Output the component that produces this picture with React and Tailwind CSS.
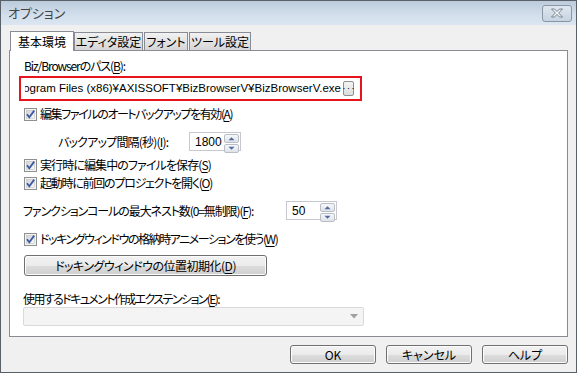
import React from "react"

const jp = "font-['Noto_Sans_CJK_JP','Noto_Sans',sans-serif] [font-feature-settings:'palt'_1] [font-kerning:normal]"

// Win7-style push button gradient
const btn =
  "flex items-center justify-center rounded-[3px] border border-[#707070] bg-[linear-gradient(#f2f2f2_0%,#ebebeb_50%,#dddddd_51%,#cfcfcf_100%)] shadow-[inset_0_0_0_1px_#fcfcfc] text-[12px] text-black"

function U({ children }) {
  return <span className="underline underline-offset-[2px]">{children}</span>
}

function Check({ children, track }) {
  return (
    <div className="flex h-[14px] items-center">
      <svg width="13" height="13" viewBox="0 0 13 13" className="ml-[14px] shrink-0">
        <defs>
          <linearGradient id="cbg" x1="0" y1="0" x2="1" y2="1">
            <stop offset="0" stopColor="#cfd1d4" />
            <stop offset="1" stopColor="#fbfbfb" />
          </linearGradient>
        </defs>
        <rect x="0.5" y="0.5" width="12" height="12" fill="#f4f4f4" stroke="#8e8f8f" />
        <rect x="2.5" y="2.5" width="8" height="8" fill="url(#cbg)" stroke="#c1c4c8" strokeWidth="0.6" />
        <path d="M3 6.2 L5.3 9.3 L10.2 2.6" fill="none" stroke="#3d5aa0" strokeWidth="1.8" />
      </svg>
      <span className={`ml-[3px] whitespace-nowrap text-[12px] leading-none text-black ${track}`}>{children}</span>
    </div>
  )
}

function Spin({ value, width }) {
  return (
    <div className={`flex h-[19px] shrink-0 items-stretch border border-[#c5c9cf] bg-white ${width}`}>
      <span className="flex flex-1 items-center pl-[5px] font-['Liberation_Sans',sans-serif] text-[12px] text-black">
        {value}
      </span>
      <div className="my-[1px] mr-[1px] flex w-[15px] flex-col gap-[1px]">
        {["M4 6 L7.5 2.5 L11 6Z", "M4 2 L7.5 5.5 L11 2Z"].map((d) => (
          <div
            key={d}
            className="flex flex-1 items-center justify-center rounded-[2px] border border-[#b9bec6] bg-[linear-gradient(#f6f7f9,#dfe3e9)]"
          >
            <svg width="13" height="7" viewBox="0 0 15 8">
              <path d={d} fill="#4f6a9a" />
            </svg>
          </div>
        ))}
      </div>
    </div>
  )
}

function Tab({ label, active, width }) {
  if (active)
    return (
      <div
        className={`relative z-10 -mb-[1px] flex h-[20px] items-center justify-center border border-b-0 border-[#898c95] bg-white text-[12px] ${width}`}
      >
        {label}
      </div>
    )
  return (
    <div
      className={`flex h-[18px] items-center justify-center whitespace-nowrap border border-b-0 border-[#898c95] bg-[linear-gradient(#f2f2f2,#e3e3e3_50%,#d6d6d6)] pt-[1px] text-[12px] ${width}`}
    >
      {label}
    </div>
  )
}

export default function App() {
  return (
    <div className={`h-[374px] w-[579px] overflow-hidden bg-white ${jp}`}>
      <div className="flex h-[373px] w-[577px] flex-col border border-[#5a6068] bg-[#f0f0f0]">
        {/* title bar */}
        <div className="flex h-[24px] items-center justify-between bg-[linear-gradient(#bccbdb,#d3dfec_60%,#dbe6f2)] pl-[7px] pr-[4px]">
          <span className="text-[13px] text-[#444]">オプション</span>
          <div className="flex h-[17px] w-[30px] items-center justify-center rounded-[3px] border border-[#8a96a5] bg-[linear-gradient(#dfe7f0,#c7d3e1)]">
            <svg width="14" height="10" viewBox="0 0 14 10">
              <path
                d="M1.5 1 H4.5 L7 3.6 L9.5 1 H12.5 L8.6 5 L12.5 9 H9.5 L7 6.4 L4.5 9 H1.5 L5.4 5 Z"
                fill="#f4f6f8"
                stroke="#6e7784"
                strokeWidth="0.9"
                strokeLinejoin="round"
              />
            </svg>
          </div>
        </div>

        {/* tabs */}
        <div className="mt-[6px] flex items-end pl-[9px]">
          <Tab label="基本環境" active width="w-[64px]" />
          <Tab label="エディタ設定" width="w-[69px]" />
          <div className="w-[1px]" />
          <Tab label="フォント" width="w-[44px]" />
          <div className="w-[1px]" />
          <Tab label="ツール設定" width="w-[62px]" />
        </div>

        {/* panel */}
        <div className="ml-[8px] flex h-[287px] w-[559px] flex-col border border-[#898c95] bg-white text-[12px] text-black">
          <div className="ml-[14px] mt-[8px] flex h-[14px] items-center tracking-[-1.1px]">
            Biz/Browserのパス(<U>B</U>):
          </div>

          <div className="ml-[9px] mt-[3px] flex h-[25px] w-[343px] items-center border-2 border-[#e8141c] pl-[4px] pr-[6px]">
            <div className="flex min-w-0 flex-1 justify-end overflow-hidden whitespace-nowrap font-['Liberation_Sans',sans-serif] text-[11.5px]">
              C:¥Program Files (x86)¥AXISSOFT¥BizBrowserV¥BizBrowserV.exe
            </div>
            <div className="ml-[2px] flex h-[15px] w-[11px] items-end justify-center rounded-[2px] border border-[#8e8f8f] bg-[linear-gradient(#f4f4f4,#dcdcdc)] pb-[3px] text-[8px] leading-none">
              ···
            </div>
          </div>

          <div className="mt-[6px]">
            <Check track="tracking-[-1.4px]">
              編集ファイルのオートバックアップを有効(<U>A</U>)
            </Check>
          </div>

          <div className="mt-[11px] flex h-[19px] items-center">
            <span className="ml-[48px] w-[131px] shrink-0 whitespace-nowrap tracking-[-0.8px]">
              バックアップ間隔(秒)(<U>I</U>):
            </span>
            <Spin value="1800" width="w-[52px]" />
          </div>

          <div className="mt-[7px]">
            <Check track="tracking-[-0.9px]">
              実行時に編集中のファイルを保存(<U>S</U>)
            </Check>
          </div>
          <div className="mt-[4px]">
            <Check track="tracking-[-1.25px]">
              起動時に前回のプロジェクトを開く(<U>O</U>)
            </Check>
          </div>

          <div className="mt-[11px] flex h-[19px] items-center">
            <span className="ml-[13px] w-[263px] shrink-0 whitespace-nowrap tracking-[-1.1px]">
              ファンクションコールの最大ネスト数(0=無制限)(<U>F</U>):
            </span>
            <Spin value="50" width="w-[51px]" />
          </div>

          <div className="mt-[12px]">
            <Check track="tracking-[-1.45px]">
              ドッキングウィンドウの格納時アニメーションを使う(<U>W</U>)
            </Check>
          </div>

          <div className={`ml-[14px] mt-[9px] h-[21px] w-[243px] tracking-[-0.5px] ${btn}`}>
            ドッキングウィンドウの位置初期化(<U>D</U>)
          </div>

          <div className="ml-[13px] mt-[16px] flex h-[14px] items-center tracking-[-1.6px]">
            使用するドキュメント作成エクステンション(<U>E</U>):
          </div>
          <div className="ml-[13px] mt-[1px] flex h-[19px] w-[341px] items-center justify-end rounded-[2px] border border-[#d9d9d9] bg-[#f4f4f4] pr-[5px]">
            <svg width="8" height="5" viewBox="0 0 8 5">
              <path d="M0 0 H8 L4 4.5 Z" fill="#a0a0a0" />
            </svg>
          </div>
        </div>

        {/* dialog buttons */}
        <div className="mt-[8px] flex justify-end gap-[10px] pr-[8px]">
          <div className={`h-[19px] w-[86px] ${btn}`}>OK</div>
          <div className={`h-[19px] w-[86px] ${btn}`}>キャンセル</div>
          <div className={`h-[19px] w-[86px] ${btn}`}>ヘルプ</div>
        </div>
      </div>
    </div>
  )
}
